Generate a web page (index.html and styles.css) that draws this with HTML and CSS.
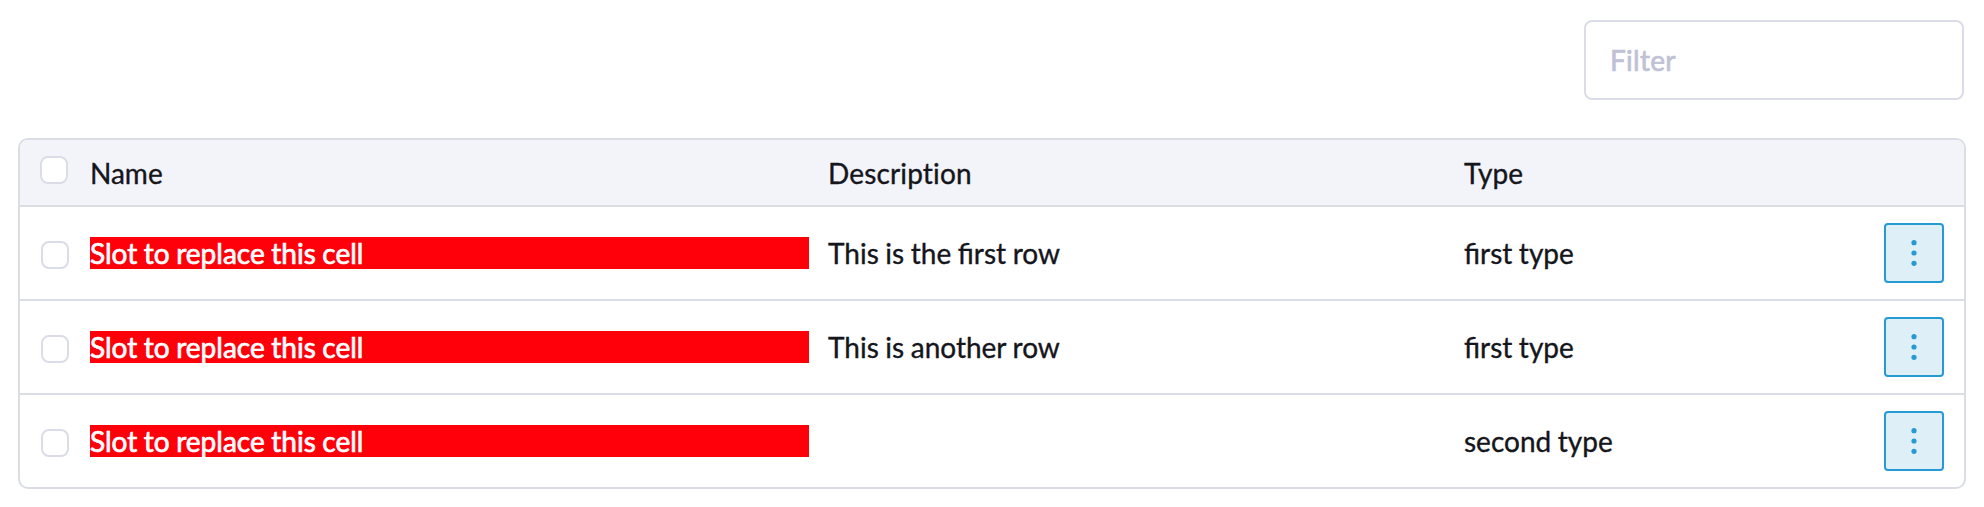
FILE: index.html
```html
<!DOCTYPE html>
<html lang="en">
<head>
<meta charset="utf-8">
<title>Table</title>
<link rel="stylesheet" href="styles.css">
</head>
<body>
<div class="toolbar"><input class="filter" type="text" placeholder="Filter"></div>
<div class="table">
  <div class="row head"><span class="check"></span><span>Name</span><span class="description">Description</span><span>Type</span></div>
  <div class="row"><span class="check"></span><span class="slot">Slot to replace this cell</span><span class="description">This is the first row</span><span>first type</span><button class="menu" aria-label="Actions"><svg width="6" height="28" viewBox="0 0 6 28"><circle cx="3" cy="3.7" r="2.6"/><circle cx="3" cy="14" r="2.6"/><circle cx="3" cy="24.3" r="2.6"/></svg></button></div>
  <div class="row"><span class="check"></span><span class="slot">Slot to replace this cell</span><span class="description">This is another row</span><span>first type</span><button class="menu" aria-label="Actions"><svg width="6" height="28" viewBox="0 0 6 28"><circle cx="3" cy="3.7" r="2.6"/><circle cx="3" cy="14" r="2.6"/><circle cx="3" cy="24.3" r="2.6"/></svg></button></div>
  <div class="row"><span class="check"></span><span class="slot">Slot to replace this cell</span><span class="description"></span><span>second type</span><button class="menu" aria-label="Actions"><svg width="6" height="28" viewBox="0 0 6 28"><circle cx="3" cy="3.7" r="2.6"/><circle cx="3" cy="14" r="2.6"/><circle cx="3" cy="24.3" r="2.6"/></svg></button></div>
</div>
</body>
</html>
```

FILE: styles.css
```css
* { box-sizing: border-box; }
body {
  margin: 0;
  padding: 20px 18px 0;
  background: #fff;
  color: #15151c;
  font: 28px/32px Lato, sans-serif;
  word-spacing: -0.6px;
  -webkit-text-stroke: 0.35px currentColor;
}
.toolbar { display: flex; justify-content: flex-end; padding-right: 2px; }
.filter {
  width: 380px;
  height: 80px;
  padding: 0 24px;
  border: 2px solid #dadde8;
  border-radius: 8px;
  font: inherit;
  letter-spacing: 0.3px;
  -webkit-text-stroke: 0.7px #bfc2d5;
}
.filter::placeholder { color: #bfc2d5; opacity: 1; }
.table {
  margin-top: 38px;
  border: 2px solid #dadde6;
  border-radius: 10px;
  overflow: hidden;
}
.row {
  display: grid;
  grid-template-columns: 30px 719px 615px 1fr 60px;
  column-gap: 20px;
  align-items: center;
  height: 94px;
  padding: 0 20px;
  border-bottom: 2px solid #dadde6;
}
.row:last-child { border-bottom: 0; height: 92px; }
.head {
  height: 67px;
  background: #f3f4fa;
  font-variant-ligatures: none;
}
.description { margin-left: -1px; }
.head .description { letter-spacing: 0.15px; }
.check {
  width: 28px;
  height: 28px;
  margin: 4px 0 0 1px;
  border: 2px solid #dadde8;
  border-radius: 8px;
  background: #fff;
}
.head .check { margin: 0 0 5px; }
.slot {
  background: #ff000a;
  color: #fff;
  -webkit-text-stroke-width: 0.7px;
}
.menu {
  display: flex;
  align-items: center;
  justify-content: center;
  width: 60px;
  height: 60px;
  padding: 0;
  border: 2px solid #269ad2;
  border-radius: 4px;
  background: #dfeff8;
  fill: #269ad2;
  -webkit-text-stroke: 0;
}
.menu svg { stroke: none; }
```
